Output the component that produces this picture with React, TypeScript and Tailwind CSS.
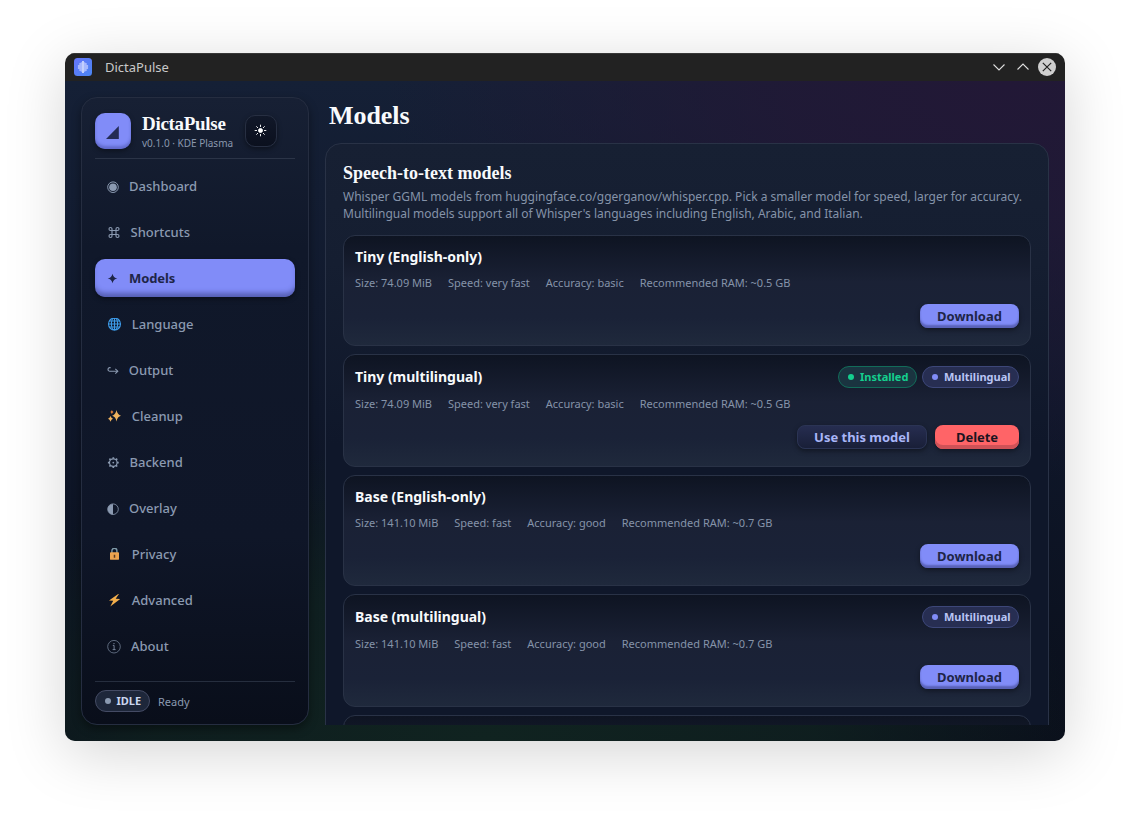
import React from 'react';

type IconProps = { name: string };

function NavIcon({ name }: IconProps) {
  switch (name) {
    case 'Dashboard':
      return (
        <svg width="12" height="14" viewBox="0 0 12 14" fill="none" stroke="currentColor">
          <circle cx="6" cy="7.2" r="5.3" strokeWidth="1" />
          <circle cx="6" cy="7.2" r="3.8" fill="currentColor" stroke="none" />
        </svg>
      );
    case 'Shortcuts':
      return (
        <svg width="14" height="14" viewBox="0 0 14 14" fill="none" stroke="currentColor" strokeWidth="1.15">
          <path d="M5 4.5H9V8.5H5ZM5 4.5V3A1.5 1.5 0 1 0 3.5 4.5H5M9 4.5H10.5A1.5 1.5 0 1 0 9 3V4.5M9 8.5V10A1.5 1.5 0 1 0 10.5 8.5H9M5 8.5H3.5A1.5 1.5 0 1 0 5 10V8.5" />
        </svg>
      );
    case 'Models':
      return (
        <svg width="12" height="14" viewBox="0 0 12 14" fill="currentColor">
          <path d="M5.5 1.7Q6.3 5.8 10.3 6.5Q6.3 7.2 5.5 11.3Q4.7 7.2 0.7 6.5Q4.7 5.8 5.5 1.7Z" />
        </svg>
      );
    case 'Language':
      return (
        <svg width="15" height="14" viewBox="0 0 15 14" fill="none" stroke="#3d9be9" strokeWidth="1.1">
          <circle cx="7.5" cy="6" r="6" />
          <ellipse cx="7.5" cy="6" rx="3.1" ry="6" />
          <path d="M7.5 0V12M1.4 6H13.6M2.3 3H12.7M2.3 9H12.7" />
        </svg>
      );
    case 'Output':
      return (
        <svg width="12" height="14" viewBox="0 0 12 14" fill="none" stroke="currentColor" strokeWidth="1.1">
          <path d="M10.5 7.2H2.8A1.8 1.8 0 0 1 2.8 3.6H3.6" />
          <path d="M8.3 4.8L10.8 7.2L8.3 9.6" />
        </svg>
      );
    case 'Cleanup':
      return (
        <svg width="15" height="14" viewBox="0 0 15 14" fill="#f0b35f">
          <path d="M9.5 0Q10.4 4.9 14 5.7Q10.4 6.5 9.5 11.4Q8.6 6.5 5.1 5.7Q8.6 4.9 9.5 0Z" />
          <path d="M3.5 6Q4.2 8.2 6 8.7Q4.2 9.2 3.5 11.7Q2.8 9.2 1 8.7Q2.8 8.2 3.5 6Z" />
          <path d="M4.9 0Q5.3 1.7 6.6 2.1Q5.3 2.5 4.9 4.2Q4.5 2.5 3.2 2.1Q4.5 1.7 4.9 0Z" fill="#e9853b" />
        </svg>
      );
    case 'Backend':
      return (
        <svg width="13" height="14" viewBox="0 0 13 14" fill="none" stroke="currentColor">
          <circle cx="6.3" cy="6.6" r="3.8" strokeWidth="1.2" />
          <path
            d="M6.3 2.8V1.2M6.3 10.4V12M2.5 6.6H0.9M10.1 6.6H11.7M3.6 3.9L2.4 2.7M9 9.3L10.2 10.5M3.6 9.3L2.4 10.5M9 3.9L10.2 2.7"
            strokeWidth="1.7"
          />
          <circle cx="6.3" cy="6.6" r="0.9" fill="currentColor" stroke="none" />
        </svg>
      );
    case 'Overlay':
      return (
        <svg width="12" height="14" viewBox="0 0 12 14" fill="none" stroke="currentColor">
          <circle cx="6" cy="7.2" r="5.3" strokeWidth="0.8" />
          <path d="M6 1.9A5.3 5.3 0 0 0 6 12.5Z" fill="currentColor" stroke="none" />
        </svg>
      );
    case 'Privacy':
      return (
        <svg width="15" height="14" viewBox="0 0 15 14" fill="none">
          <path d="M4.9 5V2.7A2.4 2.4 0 0 1 9.9 2.7V5" stroke="#7f9aa8" strokeWidth="1.4" />
          <rect x="3" y="4.2" width="9" height="7.6" rx="0.9" fill="#eda34f" />
          <path d="M7.5 6.7V9.8" stroke="#5b3a20" strokeWidth="1.5" />
        </svg>
      );
    case 'Advanced':
      return (
        <svg width="15" height="14" viewBox="0 0 15 14">
          <path d="M11.2 0L2 6.4L6.2 6.7L3.3 12.4L13.2 5.1L8.7 4.7L11.9 0Z" fill="#f3ae4b" />
        </svg>
      );
    default:
      return (
        <svg width="14" height="14" viewBox="0 0 14 14" fill="none" stroke="currentColor">
          <circle cx="7" cy="6.7" r="6.3" strokeWidth="0.8" opacity="0.8" />
          <path d="M5.8 5.4H7.1V9.6M5.6 9.6H8.6" strokeWidth="0.8" />
          <circle cx="7" cy="3.6" r="0.6" fill="currentColor" stroke="none" />
        </svg>
      );
  }
}

const navItems = [
  { label: 'Dashboard', box: 'w-[22px]' },
  { label: 'Shortcuts', box: 'w-[23.5px]' },
  { label: 'Models', box: 'w-[22px]', active: true },
  { label: 'Language', box: 'w-[24.8px]' },
  { label: 'Output', box: 'w-[21.8px]' },
  { label: 'Cleanup', box: 'w-[24.8px]' },
  { label: 'Backend', box: 'w-[22.5px]' },
  { label: 'Overlay', box: 'w-[22px]' },
  { label: 'Privacy', box: 'w-[24.8px]' },
  { label: 'Advanced', box: 'w-[24.8px]' },
  { label: 'About', box: 'w-[24px]' },
];

type Model = {
  name: string;
  size: string;
  speed: string;
  accuracy: string;
  ram: string;
  multilingual?: boolean;
  installed?: boolean;
};

const models: Model[] = [
  { name: 'Tiny (English-only)', size: '74.09 MiB', speed: 'very fast', accuracy: 'basic', ram: '~0.5 GB' },
  { name: 'Tiny (multilingual)', size: '74.09 MiB', speed: 'very fast', accuracy: 'basic', ram: '~0.5 GB', multilingual: true, installed: true },
  { name: 'Base (English-only)', size: '141.10 MiB', speed: 'fast', accuracy: 'good', ram: '~0.7 GB' },
  { name: 'Base (multilingual)', size: '141.10 MiB', speed: 'fast', accuracy: 'good', ram: '~0.7 GB', multilingual: true },
];

const cardSurface =
  'shrink-0 rounded-xl border border-[#293246] bg-[linear-gradient(180deg,#0e1422_0%,#1a2135_42%,#1a2237_75%,#1f293c_100%)]';

function ModelCard({ model }: { model: Model }) {
  return (
    <article className={`${cardSurface} ${model.multilingual ? 'h-[113px]' : 'h-[111px]'} flex flex-col px-[11px] pt-[11px]`}>
      <div className={`flex items-center ${model.multilingual ? 'h-[22px]' : 'h-5'}`}>
        <h3 className="pb-0.5 text-[14px] font-bold tracking-[-0.02px] text-[#f8fafc]">{model.name}</h3>
        <div className="ml-auto flex gap-[5px]">
          {model.installed && (
            <span className="flex h-[22px] w-[79px] items-center gap-[6px] rounded-full border border-[#126c59] bg-[#1a3440] pl-[9px] text-[11px] font-bold text-[#14cf8e]">
              <i className="size-1.5 rounded-full bg-[#14cf8e]" />
              Installed
            </span>
          )}
          {model.multilingual && (
            <span className="flex h-[22px] w-[97px] items-center gap-[6px] rounded-full border border-[#3d4779] bg-[#272e52] pl-[9px] text-[11px] font-bold text-[#b9c5f5]">
              <i className="size-1.5 rounded-full bg-[#818cf8]" />
              Multilingual
            </span>
          )}
        </div>
      </div>
      <div className="mt-[9px] flex h-[15px] items-center gap-[16px] whitespace-nowrap text-[11px] text-[#8593a9]">
        <span>Size: {model.size}</span>
        <span>Speed: {model.speed}</span>
        <span>Accuracy: {model.accuracy}</span>
        <span>Recommended RAM: {model.ram}</span>
      </div>
      <div className="mt-[13px] flex h-6 justify-end gap-2">
        {model.installed ? (
          <>
            <button className="h-6 w-[130px] rounded-lg border border-[#2b3454] bg-gradient-to-b from-[#262d50] to-[#191f38] text-[13px] leading-[22px] font-bold tracking-[-0.02px] text-[#a9b6f8] shadow-[0_2px_5px_rgba(0,0,0,0.4)]">
              Use this model
            </button>
            <button className="h-6 w-[84px] rounded-lg bg-[#ff6467] text-[13px] leading-6 font-bold tracking-[-0.02px] text-[#1c1420] shadow-[inset_0_-4px_0_#cf5257,0_2px_5px_rgba(0,0,0,0.4)]">
              Delete
            </button>
          </>
        ) : (
          <button className="h-6 w-[99px] rounded-lg bg-[#818cf8] text-[13px] leading-6 font-bold tracking-[-0.02px] text-[#1e2547] shadow-[inset_0_-3px_2px_rgba(50,56,120,0.5),0_2px_5px_rgba(0,0,0,0.4)]">
            Download
          </button>
        )}
      </div>
    </article>
  );
}

function TitleBar() {
  return (
    <header className="flex h-7 shrink-0 items-center border-t border-[#383838] bg-[#222222] pr-[9px] pb-px pl-[9px]">
      <svg width="18" height="18" viewBox="0 0 18 18">
        <defs>
          <linearGradient id="app" x1="0" y1="0" x2="1" y2="1">
            <stop stopColor="#6675fb" />
            <stop offset="1" stopColor="#4a86f2" />
          </linearGradient>
        </defs>
        <rect width="18" height="18" rx="3.5" fill="url(#app)" />
        <path d="M4.6 7V11M6 5V13M7.4 4.2V13.8M10.6 4.2V13.8M12 5V13M13.4 7V11" stroke="#b5c2ff" strokeWidth="1.4" opacity="0.85" />
        <path d="M9 3V15" stroke="#eef1ff" strokeWidth="1.4" />
      </svg>
      <span className="ml-[13px] pt-0.5 text-[13px] text-[#c9c9c9]">DictaPulse</span>
      <svg className="ml-auto" width="44" height="18" viewBox="0 0 44 18" fill="none" stroke="#dcdcdc" strokeWidth="1.1">
        <path d="M4.5 6.5L10 12L15.5 6.5M28.5 11.5L34 6L39.5 11.5" />
      </svg>
      <svg className="ml-[5px]" width="18" height="18" viewBox="0 0 18 18" fill="none">
        <circle cx="9" cy="9" r="9" fill="#cfcfcf" />
        <path d="M4.8 4.8L13.2 13.2M13.2 4.8L4.8 13.2" stroke="#222" strokeWidth="1.2" />
      </svg>
    </header>
  );
}

function Sidebar() {
  return (
    <aside className="flex h-[628px] w-[228px] shrink-0 flex-col rounded-2xl border border-[#252d40] bg-[linear-gradient(180deg,#172034_0%,#10182a_24%,#0f1628_70%,#090e1a_100%)] px-[13px] shadow-[0_4px_10px_rgba(0,0,0,0.4)]">
      <div className="flex h-[61px] shrink-0 border-b border-[#2b3447] pt-[15px]">
        <div className="flex size-9 items-center justify-center rounded-[10px] bg-[#818cf8] pt-[2px] pr-px shadow-[inset_0_-3px_3px_rgba(60,66,150,0.45),0_2px_5px_rgba(0,0,0,0.4)]">
          <svg width="13" height="13" viewBox="0 0 13 13">
            <path d="M12.8 0V13H0Z" fill="#242c55" />
          </svg>
        </div>
        <div className="ml-[11px] w-[92px] whitespace-nowrap">
          <div className="mt-[1px] font-['Liberation_Serif',serif] text-[19px] leading-5 font-bold tracking-[-0.3px] text-[#f8fafc]">DictaPulse</div>
          <div className="mt-[1px] text-[10px] leading-4 text-[#8a97ad]">v0.1.0 · KDE Plasma</div>
        </div>
        <button className="mt-0.5 ml-[11px] flex size-8 items-center justify-center rounded-[10px] border border-[#272f42] bg-gradient-to-b from-[#111829] to-[#0b101e] pr-px pb-0.5 text-white shadow-[0_2px_5px_rgba(0,0,0,0.4)]">
          <svg width="13" height="13" viewBox="0 0 13 13" stroke="currentColor" strokeWidth="0.9">
            <circle cx="6.5" cy="6.5" r="2" fill="currentColor" />
            <path d="M6.5 0.7V3M6.5 10V12.3M0.7 6.5H3M10 6.5H12.3M2.3 2.3L4 4M9 9L10.7 10.7M2.3 10.7L4 9M9 4L10.7 2.3" />
          </svg>
        </button>
      </div>
      <nav className="flex flex-col gap-2 pt-2">
        {navItems.map((item) => (
          <a
            key={item.label}
            className={`flex h-[38px] items-center rounded-[10px] pt-px pl-3 text-[13px] ${
              item.active
                ? 'bg-[#818cf8] font-bold tracking-[-0.1px] text-[#1e2547] shadow-[inset_0_-6px_5px_-2px_rgba(50,56,120,0.55),0_2px_5px_rgba(0,0,0,0.4)]'
                : 'font-medium text-[#8b9ab1]'
            }`}
          >
            <span className={`${item.box} shrink-0`}>
              <NavIcon name={item.label} />
            </span>
            {item.label}
          </a>
        ))}
      </nav>
      <footer className="mt-[16px] flex h-[31px] items-end border-t border-[#262e3e]">
        <span className="flex h-[22px] w-[55px] items-center gap-[5.5px] rounded-full border border-[#444b64] bg-[#1e273a] pl-[9px] text-[11px] font-bold text-[#ccd7f0]">
          <i className="size-1.5 rounded-full bg-[#8b9ab1]" />
          IDLE
        </span>
        <span className="ml-2 text-[11px] leading-[20px] text-[#8b9ab1]">Ready</span>
      </footer>
    </aside>
  );
}

export default function App() {
  return (
    <div className="h-[818px] w-[1130px] overflow-hidden bg-white px-[65px] pt-[53px] font-['Noto_Sans',sans-serif]">
      <div className="flex h-[688px] w-[1000px] flex-col overflow-hidden rounded-[10px] shadow-[0_12px_60px_rgba(0,0,0,0.17)]">
        <TitleBar />
        <div className="flex min-h-0 flex-1 gap-4 bg-[radial-gradient(ellipse_620px_400px_at_94%_0%,#221836_0%,rgba(34,24,54,0.8)_35%,transparent_100%),radial-gradient(ellipse_600px_300px_at_42%_100%,#102320_0%,rgba(16,35,32,0.75)_55%,transparent_100%),linear-gradient(180deg,#152036_0%,#0f172a_50%,#0a0f1b_100%)] p-4">
          <Sidebar />
          <main className="flex h-[628px] w-[724px] flex-col overflow-hidden">
            <h1 className="h-[46px] shrink-0 pl-1 font-['Liberation_Serif',serif] text-[26px] leading-[37px] font-bold tracking-[-0.05px] text-[#f8fafc]">Models</h1>
            <section className="flex h-[900px] shrink-0 flex-col gap-2 rounded-2xl border border-[#293246] bg-[linear-gradient(180deg,#172033_0px,#151e31_120px,#0f172a_300px,#0f172a_100%)] px-[17px] pt-[19px]">
              <div className="h-[64px] shrink-0 whitespace-nowrap">
                <h2 className="font-['Liberation_Serif',serif] text-[18px] leading-5 font-bold text-[#f8fafc]">Speech-to-text models</h2>
                <p className="mt-[5px] text-[12px] leading-[17px] tracking-[-0.005px] text-[#8593a9]">
                  Whisper GGML models from huggingface.co/ggerganov/whisper.cpp. Pick a smaller model for speed, larger for accuracy.
                  <br />
                  Multilingual models support all of Whisper's languages including English, Arabic, and Italian.
                </p>
              </div>
              {models.map((model) => (
                <ModelCard key={model.name} model={model} />
              ))}
              <div className={`${cardSurface} h-[111px]`} />
            </section>
          </main>
        </div>
      </div>
    </div>
  );
}
